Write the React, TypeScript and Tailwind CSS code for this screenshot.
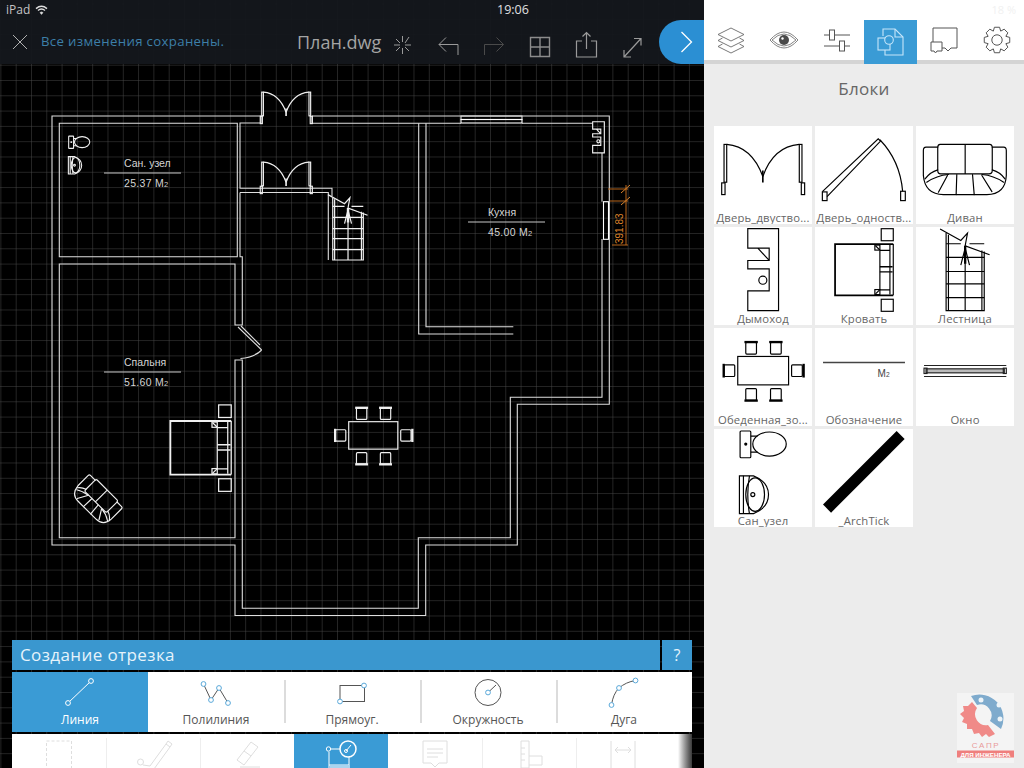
import React from 'react';

type BlockProps = { sw?: number };

const GRID_STEP = 15.3;

// Blocks are drawn in the coordinates of a 293 unit tile, so the same shapes serve the panel and the plan.
function DoubleDoor({ sw = 3.5 }: BlockProps) {
  return (
    <g fill="none" stroke="currentColor" strokeWidth={sw}>
      <rect x="42" y="72" width="8" height="113" />
      <rect x="267" y="72" width="8" height="113" />
      <rect x="35" y="187" width="10" height="35" />
      <rect x="273" y="187" width="10" height="35" />
      <path d="M50 72 Q125 78 158 168 M267 72 Q190 78 158 168" />
      <path d="M158 150 V186" strokeWidth={sw * 1.4} />
    </g>
  );
}

function SingleDoor({ sw = 3.5 }: BlockProps) {
  return (
    <g fill="none" stroke="currentColor" strokeWidth={sw}>
      <path d="M338 213 L505 55 L512 62 L352 228" />
      <rect x="338" y="214" width="14" height="26" />
      <path d="M510 58 Q570 120 578 212" />
      <rect x="572" y="212" width="14" height="28" />
    </g>
  );
}

function Sofa({ sw = 3.5 }: BlockProps) {
  return (
    <g fill="none" stroke="currentColor" strokeWidth={sw} strokeLinecap="round">
      <path d="M690 72 H838 Q846 72 846 82 V150 Q846 160 836 160 H692 Q683 160 683 150 V82 Q683 72 690 72 Z M765 72 V160" />
      <path d="M683 80 H648 Q640 80 640 90 V165 Q645 222 700 222 H830 Q885 222 888 165 V90 Q888 80 880 80 H846" />
      <path d="M645 175 Q660 155 683 148 M650 185 Q680 165 715 162 M846 148 Q870 155 884 175 M880 185 Q850 165 815 162" />
      <path d="M712 165 L685 215 M740 162 L738 222 M787 162 L792 222 M815 165 L845 213" />
    </g>
  );
}

function Chimney({ sw = 3.5 }: BlockProps) {
  return (
    <g fill="none" stroke="currentColor" strokeWidth={sw}>
      <path d="M113 327 H205 V572 H113 V513 H177 V447 H113 V422 H177 V385 H113 Z M143 385 L177 422" />
      <circle cx="158" cy="481" r="12" />
    </g>
  );
}

function Bed({ sw = 3.5 }: BlockProps) {
  return (
    <g fill="none" stroke="currentColor" strokeWidth={sw}>
      <path d="M550 373 H376 V526 H550" strokeWidth={sw * 1.5} />
      <path d="M550 373 V526" />
      <path d="M510 392 V510 M540 375 V524 M510 392 H540 M510 510 H540" />
      <path d="M510 441 H548 M510 456 H548" strokeWidth={sw * 1.2} />
      <rect x="495" y="376" width="15" height="15" />
      <path d="M497 378 L510 391" />
      <rect x="495" y="509" width="15" height="15" />
      <path d="M497 522 L510 509" />
      <rect x="514" y="327" width="36" height="36" />
      <rect x="514" y="538" width="36" height="36" />
    </g>
  );
}

function Stairs({ sw = 3.5 }: BlockProps) {
  return (
    <g fill="none" stroke="currentColor" strokeWidth={sw}>
      <path d="M708 340 V572 H822 V395 M715 345 V572 M815 392 V572" />
      <path d="M708 372 H752 M778 372 H822 M708 413 H822 M708 455 H822 M708 492 H822 M708 533 H822" />
      <path d="M765 430 V572" />
      <path d="M690 328 L752 362 L772 340 L765 378 L838 405" />
      <path d="M765 378 V432" strokeWidth={sw * 2} />
      <path d="M752 436 L765 385 L778 436" />
    </g>
  );
}

function Chair({ x, y, side, sw }: { x: number; y: number; side: 'top' | 'bottom' | 'left' | 'right'; sw: number }) {
  const bar = {
    top: `M${x - 4} ${y - 1} H${x + 36}`,
    bottom: `M${x - 4} ${y + 36} H${x + 36}`,
    left: `M${x - 1} ${y - 3} V${y + 38}`,
    right: `M${x + 36} ${y - 3} V${y + 38}`,
  }[side];
  return (
    <g>
      <rect x={x} y={y} width="32" height="35" rx="3" />
      <path d={bar} strokeWidth={sw * 2} />
    </g>
  );
}

function DiningTable({ sw = 3.5 }: BlockProps) {
  return (
    <g fill="none" stroke="currentColor" strokeWidth={sw}>
      <rect x="83" y="95" width="152" height="85" />
      <Chair x={107} y={53} side="top" sw={sw} />
      <Chair x={181} y={53} side="top" sw={sw} />
      <Chair x={107} y={191} side="bottom" sw={sw} />
      <Chair x={181} y={191} side="bottom" sw={sw} />
      <Chair x={42} y={120} side="left" sw={sw} />
      <Chair x={244} y={120} side="right" sw={sw} />
    </g>
  );
}

function Sanitary({ sw = 3.5 }: BlockProps) {
  return (
    <g fill="none" stroke="currentColor" strokeWidth={sw}>
      <rect x="90" y="318" width="32" height="80" rx="3" />
      <circle cx="107" cy="357" r="3" fill="currentColor" />
      <path d="M122 333 H142 M122 381 H142" />
      <ellipse cx="178" cy="357" rx="50" ry="36" />
      <path d="M118 452 H130 Q175 470 175 508 Q175 548 130 565 H88 V452 Z" />
      <path d="M100 452 V565 M118 452 Q108 508 118 565" />
      <ellipse cx="135" cy="508" rx="28" ry="50" />
      <circle cx="128" cy="508" r="6" />
    </g>
  );
}

function BlockTile({ label, x, y, children }: { label: string; x: number; y: number; children: React.ReactNode }) {
  return (
    <div className="flex h-[98px] w-[98px] flex-col bg-white">
      <svg className="h-[85px] w-[98px] shrink-0 overflow-visible text-black" viewBox={`${x} ${y} 293 254`}>
        {children}
      </svg>
      <div className="h-[13px] overflow-hidden text-center text-[11.3px] leading-[13px] tracking-[0.15px] whitespace-nowrap text-[#666]">
        {label}
      </div>
    </div>
  );
}

function RoomLabel({ name, area, x, y }: { name: string; area: string; x: number; y: number }) {
  return (
    <g fontFamily="'Liberation Sans', sans-serif" fontSize="10.5" fill="#d4d4d4">
      <text x={x + 20} y={y}>{name}</text>
      <path d={`M${x} ${y + 6} H${x + 77}`} stroke="#c8c8c8" strokeWidth="1" />
      <text x={x + 20} y={y + 20} letterSpacing="0.3">
        {area} М<tspan fontSize="7.5">2</tspan>
      </text>
    </g>
  );
}

function FloorPlan() {
  return (
    <svg className="absolute inset-0 h-full w-full bg-black" viewBox="0 0 704 768">
      <defs>
        <pattern id="cad-grid" x="0.4" y="3.5" width={GRID_STEP} height={GRID_STEP} patternUnits="userSpaceOnUse">
          <path d={`M${GRID_STEP} 0 H0 V${GRID_STEP}`} fill="none" stroke="#484848" strokeWidth="1" />
        </pattern>
      </defs>
      <rect width="704" height="768" fill="url(#cad-grid)" />

      <g fill="none" stroke="#dedede" strokeWidth="1.1">
        {/* outer contour */}
        <path d="M261 116 H52 V545 H235 V615.5 H425.7 V545 H517.3 V404.3 H609.3 V116 H312" />
        <path d="M261 116 V123 H240 V188.3 H332 V196" />
        <path d="M312 116 V123.3 H461 M522 123.3 H592" />
        {/* left rooms */}
        <path d="M59.3 123.3 H237.3 V256.7 H59.3 Z" />
        <path d="M240 192.5 V256.7 H242.3 V325 H235 V264 H59.3 V537.7 H235 V360 H242.3 V608.3 H418.3 V537.7 H510.3 V397.3 H602 V239" />
        <path d="M240 192.5 H328.3 V260" />
        {/* kitchen */}
        <path d="M418.7 123.3 V334 H513.3 M426 123.3 V326.7 H513.3" />
        <path d="M602 153 V201.7" />
        {/* windows */}
        <rect x="461" y="116" width="61" height="3.5" />
        <rect x="461" y="119.5" width="61" height="3.5" stroke="#fff" />
        <rect x="603.5" y="201.7" width="5" height="37.6" stroke="#fff" />
        {/* door to the bedroom */}
        <path d="M238 327 L261.7 350 M241 326 L260 345 M240.5 358.5 Q255 357 261.7 350" />
      </g>

      <g className="text-[#f0f0f0]">
        <g transform="translate(252.9 77) scale(0.21)"><DoubleDoor sw={5.5} /></g>
        <g transform="translate(252.9 147) scale(0.21)"><DoubleDoor sw={5.5} /></g>
        <g transform="translate(143 106.7) scale(0.268)"><Stairs sw={4.5} /></g>
        <g transform="translate(578.3 80.2) scale(0.127)"><Chimney sw={9} /></g>
        <g transform="translate(38.75 290.45) scale(0.35)"><Bed sw={3.5} /></g>
        <g transform="translate(321.9 391) scale(0.323)"><DiningTable sw={3.6} /></g>
        <g transform="translate(54.9 87.5) scale(0.153)"><Sanitary sw={7} /></g>
        <g transform="translate(97 500) rotate(45) scale(0.19) translate(-764 -147)"><Sofa sw={6} /></g>
      </g>

      <RoomLabel name="Сан. узел" area="25.37" x={104} y={167} />
      <RoomLabel name="Кухня" area="45.00" x={468} y={216} />
      <RoomLabel name="Спальня" area="51.60" x={104} y={366} />

      {/* dimension */}
      <g stroke="#b8661c" strokeWidth="1" fill="none">
        <path d="M608 189 H628 M610 201 H628 M626 185 V245 M612 245 H628" />
        <path d="M621 193 L630 185 M621 205 L630 197" stroke="#d9822b" />
      </g>
      <text
        transform="translate(623 244) rotate(-90)"
        fontFamily="'Liberation Sans', sans-serif"
        fontSize="10"
        fill="#d9822b"
      >
        391.83
      </text>
    </svg>
  );
}

function TopBar() {
  return (
    <div className="relative h-[64px] bg-[#14171c]/95 text-[#a0a0a0]">
      <div className="flex h-[20px] items-center justify-between pl-[6px]">
        <div className="flex w-[60px] items-center gap-[5px] text-[12px] text-[#c4c4c4]">
          <span>iPad</span>
          <svg width="13" height="10" viewBox="0 0 13 10" fill="none" stroke="#e0e0e0">
            <path d="M1 3.6 Q6.5 -1 12 3.6 M3 5.6 Q6.5 2.5 10 5.6" strokeWidth="1.4" />
            <path d="M5 7.6 Q6.5 6.3 8 7.6 L6.5 9.4 Z" fill="#e0e0e0" strokeWidth="0.6" />
          </svg>
        </div>
        <span className="absolute left-[497px] text-[12.5px] font-medium text-[#e0e0e0]">19:06</span>
      </div>

      <div className="flex h-[44px] items-center pl-[12px]">
        <svg width="16" height="16" viewBox="0 0 16 16" stroke="#b0b0b0" strokeWidth="1">
          <path d="M1 1 L15 15 M15 1 L1 15" />
        </svg>
        <span className="ml-[13px] w-[256px] text-[13.2px] tracking-[0.35px] text-[#3d7fa8]">Все изменения сохранены.</span>
        <span className="w-[96px] text-[18px] text-[#a4a4a4]">План.dwg</span>

        <svg className="h-[44px] w-[260px]" viewBox="393 20 260 44" fill="none" stroke="#9a9a9a" strokeWidth="1">
          <path d="M402.5 36 V42 M402.5 48 V54 M394 45 H400 M405 45 H411 M396 39 L400 43 M405 47 L409 51 M409 37 L405 43 M400 47 L396 51" />
          <path d="M458 55 V44.5 H439 M446 37.5 L439 44.5 L446 51.5" />
          <path d="M484.5 55 V44.5 H503.5 M496.5 37.5 L503.5 44.5 L496.5 51.5" stroke="#4a4a4a" />
          <path d="M530.5 37.5 H549.5 V56.5 H530.5 Z M540 37.5 V56.5 M530.5 47 H549.5" stroke="#8c8c8c" strokeWidth="1.4" />
          <path d="M582 41 H576.5 V57 H596.5 V41 H591 M586.5 49 V32.5 M582.5 36.5 L586.5 32.5 L590.5 36.5" strokeWidth="1.2" />
          <path d="M624 57 L641 38.5 M624 50 V57 H631 M634 38.5 H641 V45.5" strokeWidth="1.2" />
        </svg>
      </div>

      {/* close the right panel */}
      <div className="absolute right-0 bottom-0 flex h-[44px] w-[45px] items-center justify-center rounded-l-[24px] bg-[#2b8fd3]">
        <svg className="ml-[9px]" width="13" height="22" viewBox="0 0 13 22" fill="none" stroke="#fff" strokeWidth="1.3">
          <path d="M1.5 1 L11.5 11 L1.5 21" />
        </svg>
      </div>
    </div>
  );
}

const shapeTools = [
  { label: 'Линия', x0: 12, active: true, sep: false },
  { label: 'Полилиния', x0: 148, active: false, sep: false },
  { label: 'Прямоуг.', x0: 284, active: false, sep: true },
  { label: 'Окружность', x0: 420, active: false, sep: true },
  { label: 'Дуга', x0: 556, active: false, sep: true },
];

function ShapeIcon({ name, color }: { name: string; color: string }) {
  const node = (cx: number, cy: number, key: number) => (
    <circle key={key} cx={cx} cy={cy} r="2.4" fill="#fff" stroke="#5aa9da" strokeWidth="1" />
  );
  if (name === 'Линия') {
    return (
      <g>
        <path d="M68 703 L91 681" stroke="#fff" strokeWidth="1" />
        <circle cx="68" cy="703" r="2.4" fill="#3a9bd5" stroke="#fff" />
        <circle cx="91" cy="681" r="2.4" fill="#3a9bd5" stroke="#fff" />
      </g>
    );
  }
  if (name === 'Полилиния') {
    const pts: [number, number][] = [[203.5, 684], [211, 700], [219, 688], [228, 703]];
    return (
      <g>
        <path d="M203.5 684 L211 700 L219 688 L228 703" fill="none" stroke={color} />
        {pts.map((p, i) => node(p[0], p[1], i))}
      </g>
    );
  }
  if (name === 'Прямоуг.') {
    return (
      <g>
        <rect x="340" y="685.5" width="24.5" height="16" fill="none" stroke={color} />
        {node(364, 685.5, 0)}
        {node(340, 701.5, 1)}
      </g>
    );
  }
  if (name === 'Окружность') {
    return (
      <g>
        <circle cx="488" cy="692.5" r="13" fill="none" stroke={color} />
        <path d="M488 692.5 L496 685" stroke={color} />
        {node(488, 692.5, 0)}
      </g>
    );
  }
  return (
    <g>
      <path d="M611.5 705 Q613 694 619 688 Q626 682 635.5 680.5" fill="none" stroke={color} />
      {node(611.5, 705, 0)}
      {node(619, 688, 1)}
      {node(635.5, 680.5, 2)}
    </g>
  );
}

function ModeIcon({ index, active }: { index: number; active: boolean }) {
  const stroke = active ? '#fff' : '#dedede';
  const paths = [
    <rect key="a" x="46.5" y="741" width="25" height="30" fill="none" strokeDasharray="3 2" />,
    <g key="b" fill="none">
      <path d="M150 766 L166 744 L170 747 L154 769 M166 744 L168 741 L172 744 L170 747" />
      <circle cx="140.5" cy="762" r="3" />
      <path d="M143 765 L150 766" />
    </g>,
    <path key="c" d="M237 760 L251 742 L258 747 L244 765 Z M244 751 L251 756 M240 767 H260" fill="none" />,
    <g key="d" fill="none">
      <path d="M331 749 H340 M329 752 V768 M349 757 V765 M329 765 H349" />
      <circle cx="328.5" cy="749" r="2.2" />
      <circle cx="348" cy="749" r="8" strokeWidth="1.5" />
      <path d="M346 751 L351 745" />
      <circle cx="346" cy="751" r="1.5" />
      <rect x="330" y="765" width="20" height="4" fill="#a9d4ef" stroke="none" />
    </g>,
    <path key="e" d="M423 741 H447 V763 H439 L435 767 L431 763 H423 Z M427 749 H443 M427 753 H443 M427 757 H438" fill="none" />,
    <path key="f" d="M521 741 H529 V768 H521 Z M529 756 H542 V765 H529 M521 748 H525 M521 754 H525 M521 760 H525" fill="none" />,
    <path key="g" d="M611 741 V768 M635 741 V768 M615 750 H631 M618 747 L615 750 L618 753 M628 747 L631 750 L628 753" fill="none" />,
  ];
  return <g stroke={stroke} strokeWidth="1">{paths[index]}</g>;
}

function BottomPanel() {
  return (
    <div className="relative ml-[12px] flex w-[680px] flex-col gap-[2px]">
      <div className="flex h-[30px] gap-[2px] text-[#e6f3fb]">
        <div className="flex flex-1 items-center bg-[#3a97cf] pl-[8px] text-[17px] tracking-[0.4px]">Создание отрезка</div>
        <div className="flex w-[30px] items-center justify-center bg-[#3a97cf] text-[16px]">?</div>
      </div>

      <div className="flex h-[60px] bg-white">
        {shapeTools.map((t) => (
          <div
            key={t.label}
            className={`relative flex w-[136px] flex-col ${t.active ? 'bg-[#3a9bd5] text-white' : 'text-[#555]'}`}
          >
            {t.sep && <span className="absolute top-[8px] left-0 h-[43px] w-[2px] bg-[#dcdcdc]" />}
            <svg className="h-[38px] w-[136px] shrink-0" viewBox={`${t.x0} 672 136 38`}>
              <ShapeIcon name={t.label} color="#555" />
            </svg>
            <div className="h-[20px] text-center text-[12px] leading-[20px]">{t.label}</div>
          </div>
        ))}
      </div>

      <div className="relative flex h-[34px] overflow-hidden bg-white">
        {[0, 1, 2, 3, 4, 5, 6].map((i) => {
          const x0 = 12 + i * 94;
          return (
            <div key={i} className={`relative h-[34px] w-[94px] shrink-0 ${i === 3 ? 'bg-[#3a9bd5]' : ''}`}>
              {i > 0 && i !== 3 && i !== 4 && <span className="absolute top-[4px] left-0 h-[30px] w-px bg-[#eeeeee]" />}
              <svg className="h-[34px] w-[94px]" viewBox={`${x0} 734 94 34`}>
                <ModeIcon index={i} active={i === 3} />
              </svg>
            </div>
          );
        })}
        <div className="absolute top-0 right-0 h-[34px] w-[14px] bg-linear-to-r from-white to-[#3a3a3a]" />
      </div>
    </div>
  );
}

// eight toothed cog, the points are worked out so the teeth stay even
function gearPath(cx: number, cy: number, outer: number, inner: number) {
  const pts: string[] = [];
  for (let i = 0; i < 8; i++) {
    const a = (i * Math.PI) / 4;
    [
      [-0.39, inner],
      [-0.2, outer],
      [0.2, outer],
      [0.39, inner],
    ].forEach(([da, r]) => {
      pts.push(`${(cx + r * Math.sin(a + da)).toFixed(2)} ${(cy - r * Math.cos(a + da)).toFixed(2)}`);
    });
  }
  return `M${pts.join(' L')} Z`;
}

function PanelTabs() {
  return (
    <div className="grid h-[44px] grid-cols-6 border-b-[4px] border-[#d4d4d4] bg-white">
      <div className="flex items-center justify-center">
        <svg width="28" height="28" viewBox="0 0 28 28" fill="none" stroke="#6a6a6a" strokeWidth="0.9">
          <path d="M14 2 L27 8.5 L14 15 L1 8.5 Z" />
          <path d="M5.5 12 L1 14.5 L14 21 L27 14.5 L22.5 12" />
          <path d="M5.5 18 L1 20.5 L14 27 L27 20.5 L22.5 18" />
        </svg>
      </div>
      <div className="flex items-center justify-center">
        <svg width="30" height="18" viewBox="0 0 30 18" fill="none" stroke="#777" strokeWidth="0.9">
          <path d="M1 9 Q8 1 15 1 Q22 1 29 9 Q22 17 15 17 Q8 17 1 9 Z" />
          <path d="M3 9 Q9 3 15 3 Q21 3 27 9 Q21 15 15 15 Q9 15 3 9 Z" />
          <circle cx="15" cy="9" r="5" fill="#4a4a4a" stroke="none" />
          <circle cx="13.5" cy="7.5" r="1.2" fill="#fff" stroke="none" />
        </svg>
      </div>
      <div className="flex items-center justify-center">
        <svg width="28" height="24" viewBox="0 0 28 24" fill="none" stroke="#555" strokeWidth="1">
          <path d="M1 7 H6 M12 7 H27 M1 18 H16 M22 18 H27" />
          <rect x="6.5" y="2" width="5" height="10" />
          <rect x="16.5" y="13" width="5" height="10" />
        </svg>
      </div>
      <div className="-mb-[4px] flex items-center justify-center bg-[#3a9bd5]">
        <svg width="28" height="28" viewBox="0 0 28 28" fill="none" stroke="#c6e6fa" strokeWidth="1.1">
          <path d="M6 8 V1 H18 L26 9 V27 H8 V22" />
          <path d="M18 1 V9 H26" />
          <rect x="1" y="10" width="12" height="12" />
          <circle cx="12" cy="12" r="4.3" fill="#3a9bd5" />
        </svg>
      </div>
      <div className="flex items-center justify-center">
        <svg width="28" height="27" viewBox="0 0 28 27" fill="none" stroke="#555" strokeWidth="1">
          <path d="M3 15 V1 H27 V21 H21 L18 24 L15 21 H12" />
          <path d="M1 15 H12 V24 H7 L5.5 26 L4 24 H1 Z" fill="#fff" />
        </svg>
      </div>
      <div className="flex items-center justify-center">
        <svg width="28" height="28" viewBox="0 0 28 28" fill="none" stroke="#555" strokeWidth="1">
          <path d={gearPath(14, 14, 13, 9.6)} strokeLinejoin="round" />
          <circle cx="14" cy="14" r="5.2" />
        </svg>
      </div>
    </div>
  );
}

function WatermarkLogo() {
  return (
    <svg className="absolute top-[693px] left-[253px] h-[70px] w-[57px]" viewBox="0 0 57 70">
      <rect width="57" height="70" fill="#f4f4f4" />
      <path d="M14 3 A24 24 0 0 1 44 36 L33 28 A11 11 0 0 0 20 12 Z" fill="#7fabcd" />
      <circle cx="24" cy="7" r="2.5" fill="#eef4f8" />
      <circle cx="42" cy="12" r="2.5" fill="#eef4f8" />
      <circle cx="43" cy="26" r="2.5" fill="#eef4f8" />
      <path
        d="M15 9 L20 15 A11 11 0 0 0 31 32 L38 41 L32 44 L29 41 L25 44 L22 40 L17 41 L15 36 L10 36 L10 31 L5 29 L7 25 L3 21 L7 18 L6 13 L11 13 Z"
        fill="#f08a88"
      />
      <text x="29" y="55" textAnchor="middle" fontFamily="'Liberation Sans', sans-serif" fontSize="8" letterSpacing="1.6" fill="#e99b9a">
        САПР
      </text>
      <rect y="57.5" width="57" height="7" fill="#ef7f7d" />
      <text x="28.5" y="63.5" textAnchor="middle" fontFamily="'Liberation Sans', sans-serif" fontSize="6.2" fontWeight="700" fill="#fff">
        ДЛЯ ИНЖЕНЕРА
      </text>
    </svg>
  );
}

function RightPanel() {
  return (
    <div className="relative h-[768px] w-[320px] shrink-0 bg-[#ececec]">
      <div className="flex h-[20px] items-center justify-end gap-1 bg-white pr-[8px] text-[11px] text-[#f1f1f1]">
        18 %
      </div>
      <PanelTabs />
      <div className="h-[62px] pt-[13px] text-center text-[17px] leading-[24px] tracking-[0.3px] text-[#666]">Блоки</div>
      <div className="ml-[10px] grid w-[300px] grid-cols-[98px_98px_98px] gap-[3px]">
        <BlockTile label="Дверь_двуство..." x={12} y={17}><DoubleDoor /></BlockTile>
        <BlockTile label="Дверь_одноств..." x={316} y={17}><SingleDoor /></BlockTile>
        <BlockTile label="Диван" x={618} y={17}><Sofa /></BlockTile>
        <BlockTile label="Дымоход" x={12} y={322}><Chimney /></BlockTile>
        <BlockTile label="Кровать" x={316} y={322}><Bed /></BlockTile>
        <BlockTile label="Лестница" x={618} y={322}><Stairs /></BlockTile>
        <BlockTile label="Обеденная_зо..." x={12} y={10}><DiningTable /></BlockTile>
        <BlockTile label="Обозначение" x={316} y={10}>
          <path d="M340 113 H585" stroke="#444" strokeWidth="4" />
          <text x="503" y="155" fontFamily="'Liberation Sans', sans-serif" fontSize="30" fill="#444">
            М<tspan fontSize="20">2</tspan>
          </text>
        </BlockTile>
        <BlockTile label="Окно" x={618} y={10}>
          <g fill="none" stroke="#222" strokeWidth="3.5">
            <path d="M642 122 H888 M642 155 H888" />
            <rect x="648" y="132" width="234" height="12" fill="#bbb" />
            <rect x="642" y="130" width="9" height="16" />
            <rect x="879" y="130" width="9" height="16" />
          </g>
        </BlockTile>
        <BlockTile label="Сан_узел" x={12} y={312}><Sanitary /></BlockTile>
        <BlockTile label="_ArchTick" x={316} y={312}>
          <path d="M352 550 L572 330" stroke="#000" strokeWidth="34" />
        </BlockTile>
      </div>
      <WatermarkLogo />
    </div>
  );
}

export default function App() {
  return (
    <div className="flex h-[768px] w-[1024px] overflow-hidden font-['Open_Sans',sans-serif]">
      <div className="relative flex h-[768px] w-[704px] shrink-0 flex-col justify-between">
        <FloorPlan />
        <TopBar />
        <BottomPanel />
      </div>
      <RightPanel />
    </div>
  );
}
